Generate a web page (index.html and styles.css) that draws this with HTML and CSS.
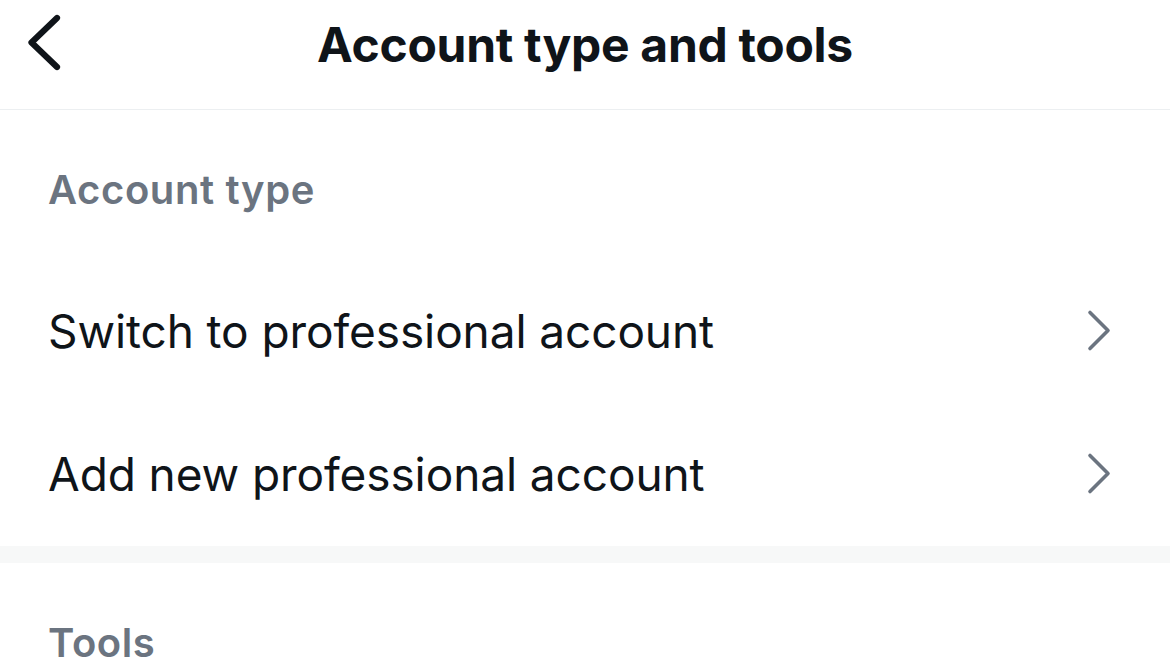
FILE: index.html
```html
<!DOCTYPE html>
<html lang="en">
<head>
<meta charset="utf-8">
<title>Account type and tools</title>
<link rel="stylesheet" href="styles.css">
</head>
<body>
<div class="screen">
  <header class="topbar">
    <div class="back">
      <svg class="back-icon" width="89" height="89" viewBox="0 0 89 89" aria-hidden="true">
        <path d="M57 18 L31.5 42.5 L57 67" fill="none" stroke="#0f1419" stroke-width="6.2" stroke-linecap="round" stroke-linejoin="round"/>
      </svg>
    </div>
    <h1 class="title">Account type and tools</h1>
    <div class="spacer"></div>
  </header>

  <section class="group">
    <h2 class="group-title">Account type</h2>
    <div class="row">
      <span class="row-label">Switch to professional account</span>
      <svg class="chev" width="30" height="50" viewBox="0 0 30 50" aria-hidden="true">
        <path d="M8 6.5 L26 24.5 L8 42.5" fill="none" stroke="#6b7480" stroke-width="3.6" stroke-linecap="round" stroke-linejoin="round"/>
      </svg>
    </div>
    <div class="row">
      <span class="row-label">Add new professional account</span>
      <svg class="chev" width="30" height="50" viewBox="0 0 30 50" aria-hidden="true">
        <path d="M8 6.5 L26 24.5 L8 42.5" fill="none" stroke="#6b7480" stroke-width="3.6" stroke-linecap="round" stroke-linejoin="round"/>
      </svg>
    </div>
  </section>

  <div class="band"></div>

  <section class="group">
    <h2 class="group-title">Tools</h2>
  </section>
</div>
</body>
</html>
```

FILE: styles.css
```css
* { box-sizing: border-box; }
html, body {
  margin: 0;
  padding: 0;
  background: #ffffff;
}
body {
  font-family: Inter, "Noto Sans", "Liberation Sans", sans-serif;
  color: #0f1419;
  overflow: hidden;
}
.screen {
  width: 1170px;
  height: 657px;
  overflow: hidden;
}
.topbar {
  height: 110px;
  border-bottom: 1px solid #eceff1;
  display: grid;
  grid-template-columns: 1fr auto 1fr;
  align-items: start;
}
.back {
  height: 89px;
  display: flex;
  align-items: flex-start;
}
.back-icon { display: block; }
.title {
  margin: 0;
  font-size: 48px;
  font-weight: 700;
  line-height: 89px;
  letter-spacing: -0.3px;
  color: #0f1419;
}
.group {
  display: flex;
  flex-direction: column;
}
.group-title {
  margin: 0;
  height: 149px;
  padding: 56px 0 0 48px;
  font-size: 40px;
  line-height: 48px;
  font-weight: 600;
  letter-spacing: 0.6px;
  color: #6b7480;
}
.row {
  height: 143.5px;
  display: flex;
  align-items: center;
  justify-content: space-between;
  padding: 0 58px 0 48px;
}
.row-label {
  font-size: 46px;
  font-weight: 400;
  line-height: 56px;
  letter-spacing: -0.1px;
  color: #0f1419;
}
.chev { display: block; flex: none; }
.band {
  height: 17px;
  background: #f7f8f8;
}
```
